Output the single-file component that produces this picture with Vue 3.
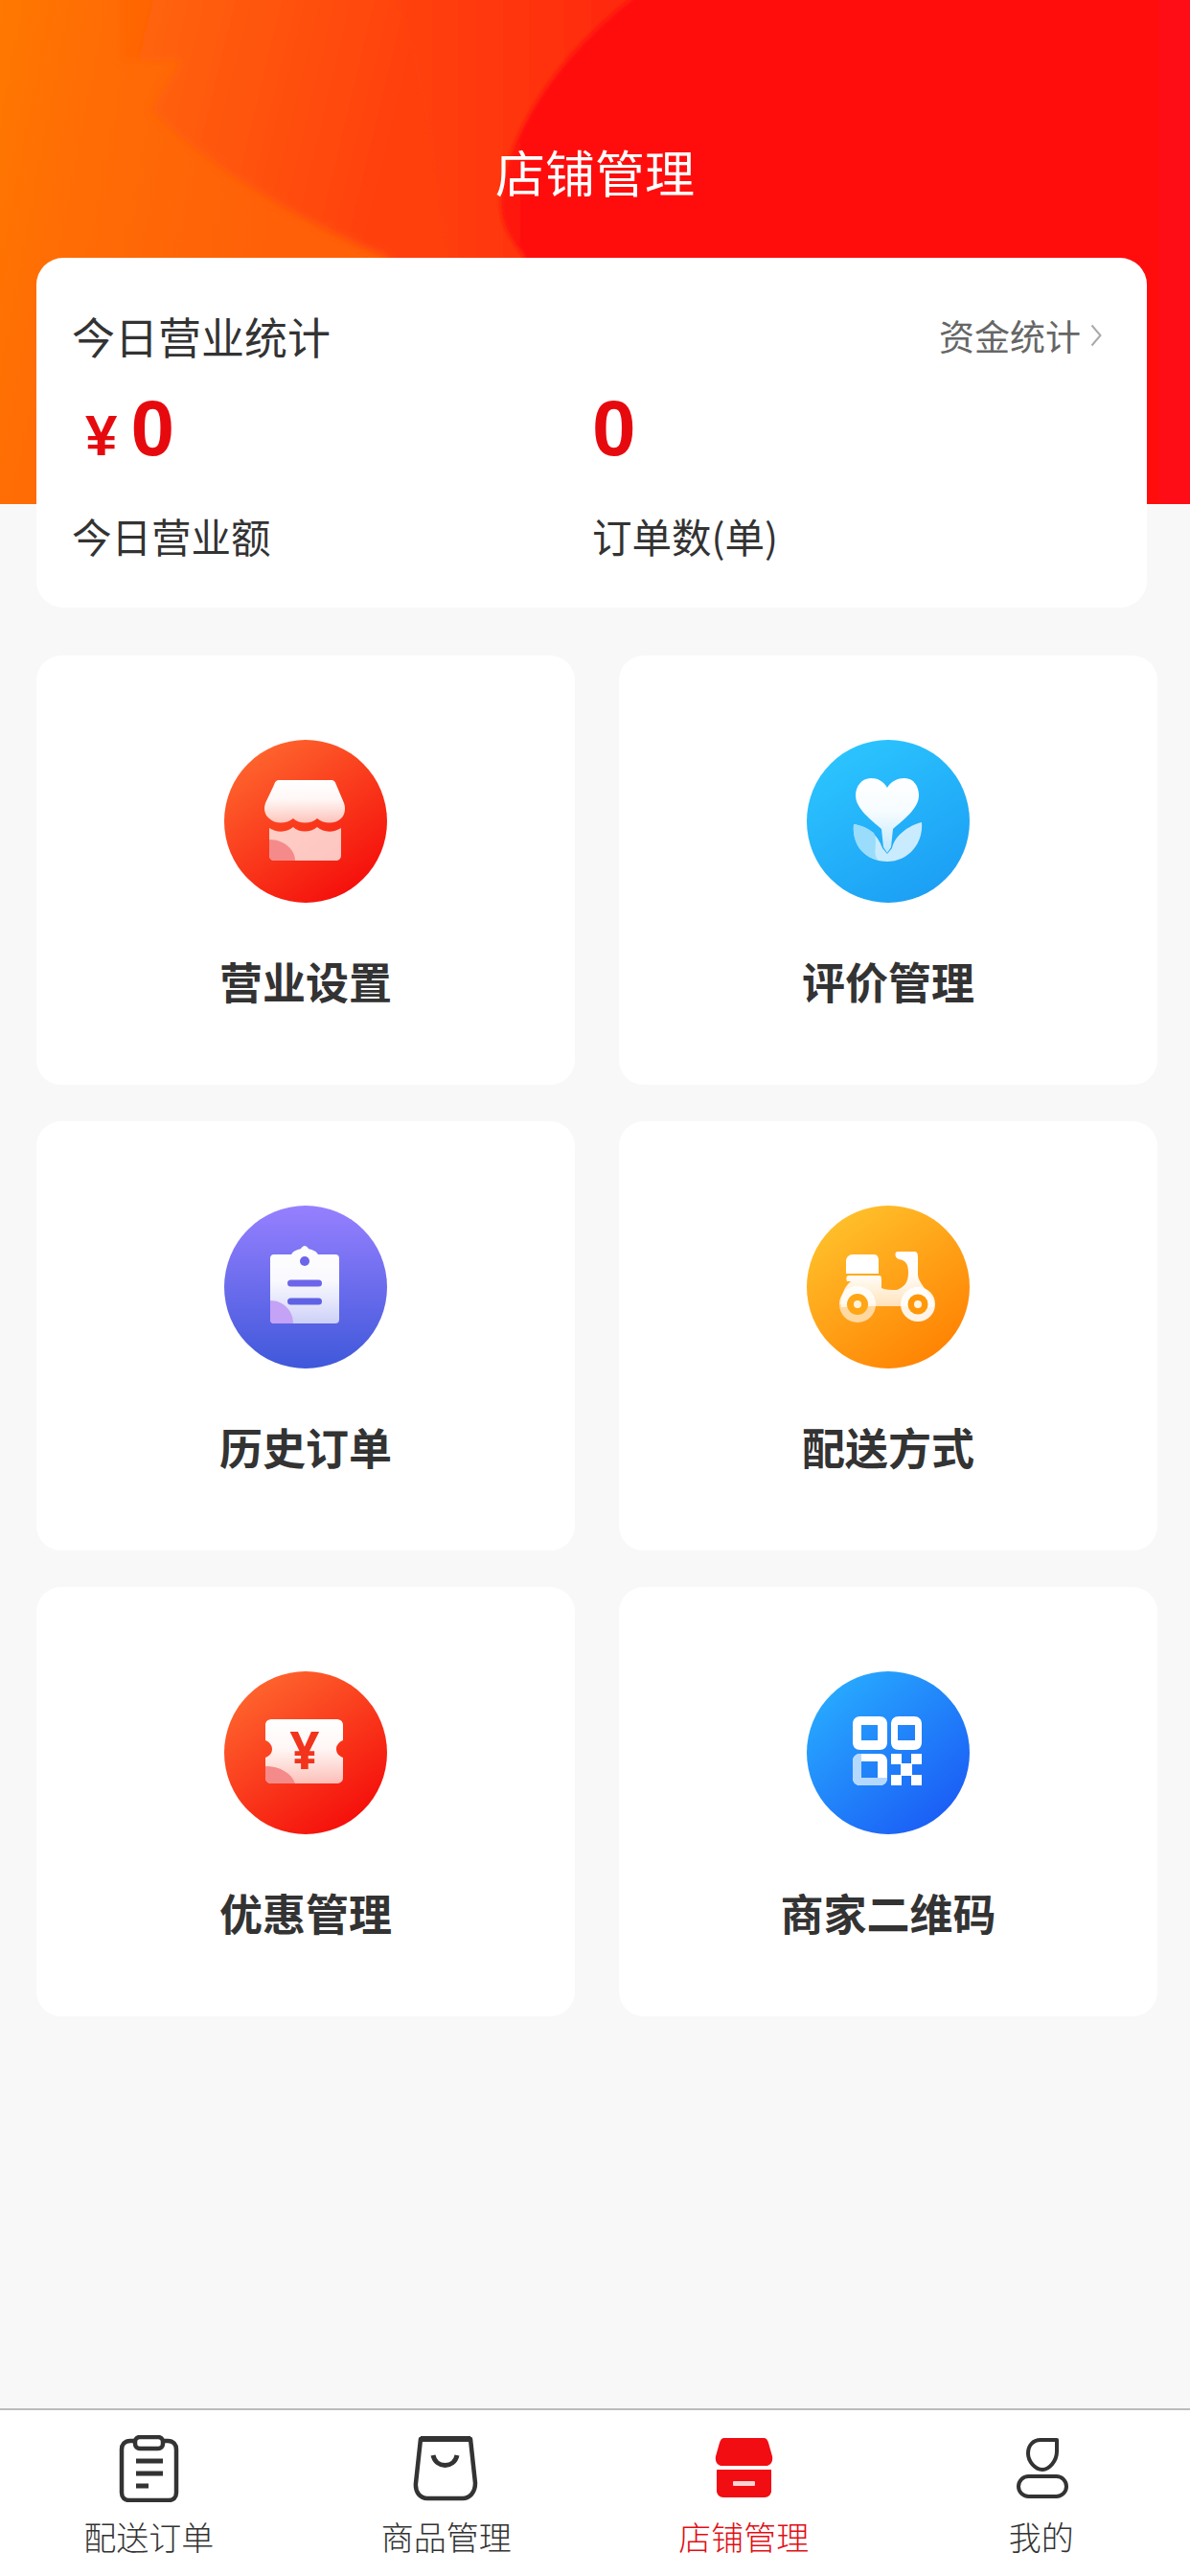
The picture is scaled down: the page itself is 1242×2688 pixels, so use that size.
<template>
  <div class="page">
    <!-- shared fade for the white glyphs -->
    <svg class="defs" width="0" height="0">
      <defs>
        <linearGradient id="fade" x1="0" y1="0" x2="0" y2="1">
          <stop offset="0" stop-color="#fff" />
          <stop offset="0.45" stop-color="#fff" stop-opacity="0.96" />
          <stop offset="1" stop-color="#fff" stop-opacity="0.7" />
        </linearGradient>
      </defs>
    </svg>

    <!-- Header -->
    <header class="hero">
      <svg class="hero-bg" viewBox="0 0 1242 526" preserveAspectRatio="none">
        <defs>
          <linearGradient id="heroA" gradientUnits="userSpaceOnUse" x1="0" y1="0" x2="320" y2="60">
            <stop offset="0" stop-color="#ff7800" />
            <stop offset="0.35" stop-color="#ff6c05" />
            <stop offset="1" stop-color="#ff6008" />
          </linearGradient>
          <linearGradient id="heroB" gradientUnits="userSpaceOnUse" x1="130" y1="60" x2="420" y2="130">
            <stop offset="0" stop-color="#ff6606" />
            <stop offset="1" stop-color="#ff4010" />
          </linearGradient>
          <linearGradient id="heroC" gradientUnits="userSpaceOnUse" x1="400" y1="0" x2="640" y2="0">
            <stop offset="0" stop-color="#ff4410" />
            <stop offset="1" stop-color="#ff2a0e" />
          </linearGradient>
          <linearGradient id="heroD" gradientUnits="userSpaceOnUse" x1="520" y1="0" x2="1242" y2="0">
            <stop offset="0" stop-color="#ff120c" />
            <stop offset="1" stop-color="#ff0a12" />
          </linearGradient>
          <filter id="soft" x="-5%" y="-5%" width="110%" height="110%">
            <feGaussianBlur stdDeviation="4" />
          </filter>
          <filter id="softer" x="-5%" y="-5%" width="110%" height="110%">
            <feGaussianBlur stdDeviation="2" />
          </filter>
        </defs>
        <rect width="1242" height="526" fill="url(#heroA)" />
        <path d="M127 -20V63H190L158 114C200 160 300 225 404 268L440 546H1262V-20Z" fill="url(#heroB)" filter="url(#soft)" />
        <path d="M404 -20C445 70 452 190 470 268V546H1262V-20Z" fill="url(#heroC)" filter="url(#softer)" />
        <path d="M670 -10C590 50 530 130 523 210C522 235 535 250 547 268V546H1262V-10Z" fill="url(#heroD)" filter="url(#softer)" />
      </svg>
      <h1 class="hero-title">店铺管理</h1>
    </header>

    <!-- Today stats -->
    <section class="stats">
      <div class="stats-head">
        <span class="stats-title">今日营业统计</span>
        <span class="stats-link">
          资金统计
          <svg class="chevron" width="12" height="24" viewBox="0 0 12 24">
            <path d="M1.5 1.5L10.5 12L1.5 22.5" fill="none" stroke="#aaa" stroke-width="2" />
          </svg>
        </span>
      </div>
      <div class="stats-cols">
        <div class="stats-col">
          <div class="stats-value"><span class="yen">¥</span><span>0</span></div>
          <div class="stats-label">今日营业额</div>
        </div>
        <div class="stats-col">
          <div class="stats-value"><span>0</span></div>
          <div class="stats-label">订单数(单)</div>
        </div>
      </div>
    </section>

    <!-- Menu -->
    <main class="menu">
      <div v-for="item in menu" :key="item.icon" class="menu-card">
        <svg class="menu-icon" width="170" height="170" viewBox="0 0 170 170">
          <defs>
            <linearGradient :id="'bg-' + item.icon" :x1="item.dir[0]" :y1="item.dir[1]" :x2="item.dir[2]" :y2="item.dir[3]">
              <stop offset="0" :stop-color="item.from" />
              <stop offset="1" :stop-color="item.to" />
            </linearGradient>
          </defs>
          <circle cx="85" cy="85" r="85" :fill="'url(#bg-' + item.icon + ')'" />

          <g v-if="item.icon === 'shop'">
            <path d="M58 42H111C115 42 116 44 117 47L125 66C127 72 126 78 122 82C116 88 104 88 97 82C91 88 78 88 72 82C65 88 53 88 47 82C42 78 41 72 43 66L52 47C53 44 54 42 58 42Z" fill="url(#fade)" />
            <path d="M47 92C55 97 65 97 72 91C78 97 90 97 97 91C104 97 114 97 122 92V120C122 124 120 126 116 126H53C49 126 47 124 47 120Z" fill="#fff" fill-opacity="0.74" />
            <path d="M47 104C63 104 74 115 74 126H53C49 126 47 124 47 120Z" fill="#f58a8a" />
          </g>

          <g v-else-if="item.icon === 'flower'">
            <path d="M84 50C88 43 95 40 102 40C112 40 117 49 117 58C117 72 100 84 90 93L88 112L84 118L80 112L78 93C68 84 51 72 51 58C51 49 57 40 67 40C74 40 80 43 84 50Z" fill="url(#fade)" />
            <path d="M49 88C62 90 74 98 79 113L84 119L89 113C92 100 105 90 120 86C122 108 106 127 84 127C62 127 47 110 49 88Z" fill="#fff" fill-opacity="0.76" />
            <path d="M49 88C57 89 64 92 70 97C75 108 68 118 74 125C58 122 47 108 49 88Z" fill="#9adcfc" />
          </g>

          <g v-else-if="item.icon === 'clipboard'">
            <path d="M52 51H70C72 47 77 46 80 45C81 43 83 42 84 42C85 42 87 43 88 45C91 46 96 47 98 51H116C119 51 120 53 120 55V119C120 122 118 123 116 123H52C49 123 48 121 48 119V55C48 53 49 51 52 51Z" fill="url(#fade)" />
            <circle cx="84" cy="58" r="5" fill="#6d66ea" />
            <rect x="66" y="77.5" width="36" height="7" rx="3.5" fill="#6d66ea" />
            <rect x="66" y="96.5" width="36" height="7" rx="3.5" fill="#5f62e4" />
            <path d="M48 99C62 99 72 110 72 123H52C49 123 48 121 48 119Z" fill="#c4a2f6" />
          </g>

          <g v-else-if="item.icon === 'scooter'">
            <path d="M48 51H70C74 51 75 54 75 58V71H41V58C41 54 44 51 48 51Z" fill="#fff" />
            <path d="M95 48H112C115 48 116 50 116 53V72C116 80 126 88 132 100L133 106L104 105H67L36 106C35 96 38 86 46 79H42C41 76 41 73 44 73H76C78 73 78 76 78 78V86C82 88 88 88 94 88C102 85 106 80 106 70C106 62 104 57 96 56C92 55 91 48 95 48Z" fill="url(#fade)" />
            <path d="M53 84A19 19 0 1 0 72 103A19 19 0 0 0 53 84Z" fill="#fff" fill-opacity="0.6" />
            <path d="M34 103A19 19 0 0 1 72 103Z" fill="#fff" fill-opacity="0.5" />
            <circle cx="53" cy="103" r="11" fill="#ffa615" />
            <circle cx="53" cy="103" r="4" fill="#fff" fill-opacity="0.85" />
            <circle cx="116" cy="103" r="18" fill="#fff" fill-opacity="0.9" />
            <circle cx="116" cy="103" r="10.5" fill="#ff9808" />
            <circle cx="116" cy="103" r="4" fill="#fff" fill-opacity="0.9" />
          </g>

          <g v-else-if="item.icon === 'ticket'">
            <path d="M50 50H117C121 50 124 52 124 56V72C119 74 117 78 117 81C117 85 119 88 124 90V111C124 115 121 117 117 117H50C46 117 43 115 43 111V90C48 88 50 85 50 81C50 78 48 74 43 72V56C43 52 46 50 50 50Z" fill="url(#fade)" />
            <path d="M43 99C58 99 70 106 74 117H50C46 117 43 115 43 111Z" fill="#f58a8a" />
            <text x="84" y="102" class="ticket-yen">¥</text>
          </g>

          <g v-else-if="item.icon === 'qr'">
            <path d="M56 47H76C81 47 84 50 84 55V74C84 79 81 82 76 82H56C51 82 48 79 48 74V55C48 50 51 47 56 47ZM57 56V72H74V56Z" fill="#fff" fill-rule="evenodd" />
            <path d="M96 47H112C117 47 120 50 120 55V74C120 79 117 82 112 82H96C91 82 88 79 88 74V55C88 50 91 47 96 47ZM95 56V72H113V56Z" fill="#fff" fill-rule="evenodd" />
            <path d="M56 86H76C81 86 84 89 84 94V111C84 116 81 119 76 119H56C51 119 48 116 48 111V94C48 89 51 86 56 86ZM57 94V111H74V94Z" fill="#fff" fill-rule="evenodd" />
            <path d="M48 94C48 89 51 86 56 86H57V111H84C84 116 81 119 76 119H56C51 119 48 116 48 111Z" fill="#b5d8ff" />
            <rect x="88" y="86" width="11" height="11" fill="#fff" />
            <rect x="109" y="86" width="11" height="11" fill="#fff" />
            <rect x="98" y="96" width="12" height="13" fill="#fff" />
            <rect x="88" y="108" width="11" height="11" fill="#fff" />
            <rect x="109" y="108" width="11" height="11" fill="#fff" />
          </g>
        </svg>
        <div class="menu-label">{{ item.label }}</div>
      </div>
    </main>

    <!-- Bottom tabs -->
    <nav class="tabbar">
      <div v-for="tab in tabs" :key="tab.icon" class="tab" :class="{ active: tab.active }">
        <svg width="70" height="70" viewBox="0 0 70 70">
          <g v-if="tab.icon === 'orders'" fill="none" stroke="#333" stroke-width="4.5">
            <path d="M21 6H16C10 6 7 10 7 15V60C7 65 10 68 15 68H56C61 68 64 65 64 60V15C64 10 61 6 55 6H50" />
            <rect x="21" y="2" width="29" height="12" rx="5" />
            <path d="M22 27H50M22 40H50M22 53H35" stroke-width="5" />
          </g>
          <g v-else-if="tab.icon === 'bag'" fill="none" stroke="#333" stroke-width="4.5">
            <path d="M8 4H60L65 50C65 60 59 66 52 66H15C8 66 2 60 3 50Z" stroke-linejoin="round" />
            <path d="M8 4H60" stroke-width="6" />
            <path d="M21 21C24 35 43 35 46 21" stroke-width="5" />
          </g>
          <g v-else-if="tab.icon === 'store'">
            <path d="M15 3H56C59 3 60 5 61 8L65 22C66 28 63 32 58 32H13C8 32 5 28 6 22L10 8C11 5 12 3 15 3Z" fill="#f10d12" />
            <path d="M7 36H64V58C64 62 61 65 57 65H14C10 65 7 62 7 58Z" fill="#f10d12" />
            <rect x="24" y="48" width="23" height="5" rx="1" fill="#fbd3d3" />
          </g>
          <g v-else fill="none" stroke="#333" stroke-width="4">
            <path d="M34 5H51V17C51 27 43 36 36 36C28 36 21 27 21 19C21 11 26 5 34 5Z" stroke-linejoin="round" />
            <rect x="11" y="43" width="50" height="21" rx="10.5" />
          </g>
        </svg>
        <span class="tab-label">{{ tab.label }}</span>
      </div>
    </nav>
  </div>
</template>

<script setup>
const menu = [
  { icon: 'shop', label: '营业设置', from: '#ff6b30', to: '#f40808', dir: [0.15, 0, 0.85, 1] },
  { icon: 'flower', label: '评价管理', from: '#2cc6ff', to: '#1b9df4', dir: [0.2, 0, 0.8, 1] },
  { icon: 'clipboard', label: '历史订单', from: '#9680ff', to: '#3f58da', dir: [0.5, 0, 0.5, 1] },
  { icon: 'scooter', label: '配送方式', from: '#ffc42e', to: '#ff7e00', dir: [0.15, 0, 0.85, 1] },
  { icon: 'ticket', label: '优惠管理', from: '#ff6b30', to: '#f40808', dir: [0.15, 0, 0.85, 1] },
  { icon: 'qr', label: '商家二维码', from: '#28aeff', to: '#1a58f5', dir: [0.1, 0.05, 0.9, 0.95] }
]

const tabs = [
  { icon: 'orders', label: '配送订单' },
  { icon: 'bag', label: '商品管理' },
  { icon: 'store', label: '店铺管理', active: true },
  { icon: 'me', label: '我的' }
]
</script>

<style scoped>
.page {
  width: 1242px;
  min-height: 2688px;
  display: flex;
  flex-direction: column;
  background-color: #f8f8f8;
  font-family: "Noto Sans CJK SC", "Noto Sans", sans-serif;
}

.defs {
  position: absolute;
}

.hero {
  position: relative;
  height: 526px;
  padding-top: 143px;
  box-sizing: border-box;
  flex-shrink: 0;
  overflow: hidden;
}

.hero-bg {
  position: absolute;
  top: 0;
  left: 0;
  width: 1242px;
  height: 526px;
}

.hero-title {
  position: relative;
  margin: 0;
  height: 72px;
  line-height: 72px;
  font-size: 52px;
  font-weight: 400;
  color: #fff;
  text-align: center;
}

.stats {
  position: relative;
  width: 1159px;
  height: 365px;
  margin: -257px 0 0 38px;
  padding: 51px 47px 0 37px;
  box-sizing: border-box;
  background-color: #fff;
  border-radius: 28px;
  flex-shrink: 0;
}

.stats-head {
  display: flex;
  justify-content: space-between;
  align-items: center;
  height: 60px;
}

.stats-title {
  font-size: 45px;
  color: #333;
}

.stats-link {
  display: flex;
  align-items: center;
  gap: 10px;
  font-size: 37px;
  color: #666;
}

.stats-cols {
  display: grid;
  grid-template-columns: 543px 1fr;
}

.stats-value {
  display: flex;
  align-items: baseline;
  gap: 14px;
  height: 76px;
  margin-top: 29px;
  line-height: 76px;
  font-family: "Liberation Sans", sans-serif;
  font-size: 82px;
  font-weight: 700;
  color: #e60a0f;
}

.yen {
  margin-left: 14px;
  font-size: 60px;
}

.stats-label {
  margin-top: 49px;
  height: 50px;
  line-height: 50px;
  font-size: 41.5px;
  color: #333;
}

.menu {
  display: grid;
  grid-template-columns: 562px 562px;
  grid-auto-rows: 448px;
  gap: 38px 46px;
  padding: 50px 0 0 38px;
  flex-shrink: 0;
}

.menu-card {
  display: flex;
  flex-direction: column;
  align-items: center;
  padding-top: 88px;
  box-sizing: border-box;
  background-color: #fff;
  border-radius: 26px;
}

.menu-label {
  margin-top: 50px;
  height: 64px;
  line-height: 64px;
  font-size: 45px;
  font-weight: 700;
  color: #333;
}

.ticket-yen {
  font-family: "Noto Sans", sans-serif;
  font-size: 54px;
  font-weight: 700;
  text-anchor: middle;
  fill: #f2341c;
}

.tabbar {
  display: grid;
  grid-template-columns: repeat(4, 1fr);
  margin-top: auto;
  height: 173px;
  background-color: #fff;
  border-top: 2px solid #bcbcbc;
}

.tab {
  display: flex;
  flex-direction: column;
  align-items: center;
  padding-top: 26px;
}

.tab-label {
  margin-top: 14px;
  height: 44px;
  line-height: 44px;
  font-size: 34px;
  font-weight: 300;
  color: #333;
}

.tab.active .tab-label {
  color: #e00f16;
}
</style>

<style>
body {
  background-color: #f8f8f8;
}
</style>
